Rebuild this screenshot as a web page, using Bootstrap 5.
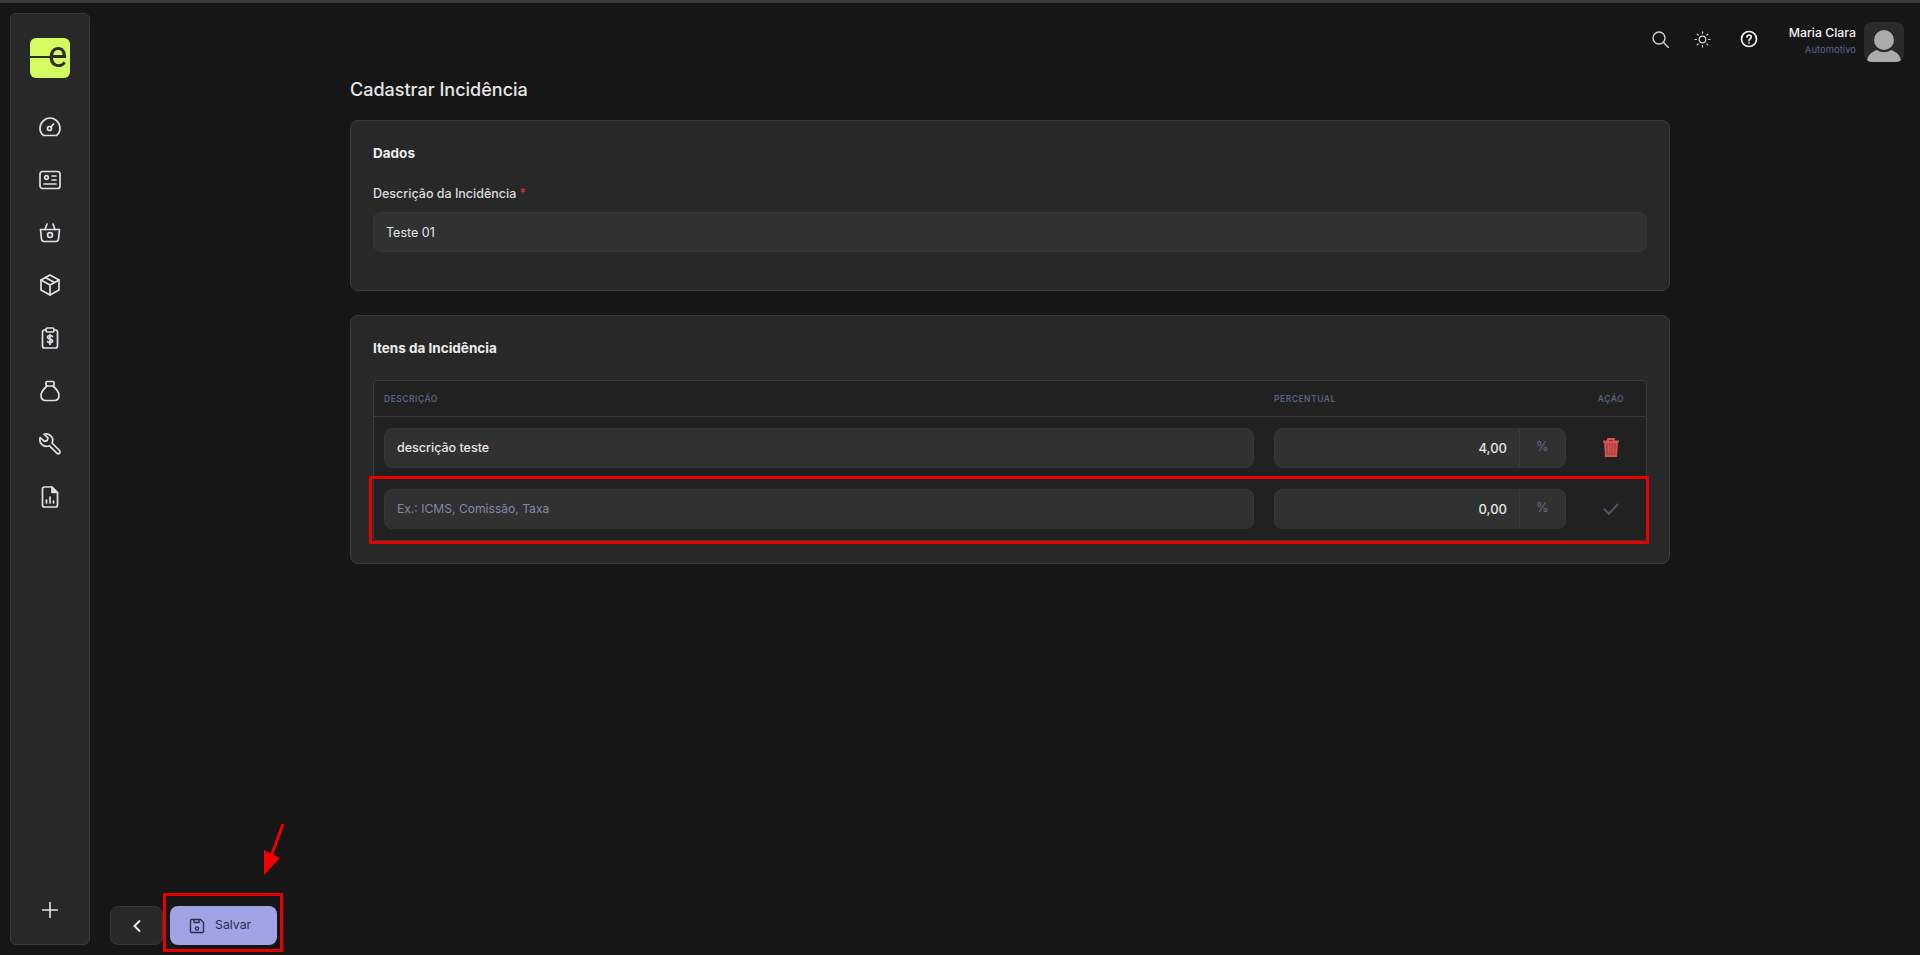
<!DOCTYPE html>
<html lang="pt-BR">
<head>
<meta charset="utf-8">
<title>Cadastrar Incidência</title>
<link href="https://cdn.jsdelivr.net/npm/bootstrap@5.3.0/dist/css/bootstrap.min.css" rel="stylesheet">
<style>
html,body{height:955px;overflow:hidden}
body{background:#161616;color:#e6e6e6;font-family:"Inter","Liberation Sans",sans-serif;font-size:12.5px;border-top:3px solid #3b3b3b;position:relative}
.app-shell{height:952px;padding:10px}
.side-rail{width:80px;height:932px;background:#282828;border:1px solid #3a3a3a;border-radius:6px;padding-top:24px;padding-bottom:25px;flex:none}
.logo-box{width:40px;height:40px;background:#d4fb5f;border-radius:6px;position:relative;color:#2a2e1c;font-size:36px;font-weight:400;line-height:34px;text-align:right;padding-right:3px;font-family:"Roboto",sans-serif}
.logo-box::before{content:"";position:absolute;left:0;top:18px;width:36px;height:2px;background:#2a2e1c}
.rail-icons{margin-top:37px;gap:28.800px}
.rail-icons svg{display:block}
.rail-ico{width:24px;height:24px;stroke:#dfe1e6;fill:none;stroke-width:1.7;stroke-linecap:round;stroke-linejoin:round}
.main-col{min-width:0;padding-left:10px}
.top-strip{height:50px;padding-top:7px;padding-right:6px}
.top-icons{margin-right:31px;margin-bottom:5px}
.top-search{margin-right:25px}
.top-sun{margin-right:29px}
.user-name{font-size:12.300px;font-weight:500;color:#f0f0f0;line-height:16px;margin-top:-1px;margin-bottom:1px}
.user-role{font-size:9.5px;color:#55658a;line-height:16px}
.user-pic{width:40px;height:40px;background:#2a2a2a;border-radius:8px;overflow:hidden}
.page-area{width:1320px;margin-left:250px}
.page-head{font-size:18px;font-weight:500;color:#e6e6e6;line-height:22px;margin-top:16px;margin-bottom:19px}
.panel-box{background:#282828;border:1px solid #3d3d3d;border-radius:8px;padding:22px 22px 0 22px}
.panel-one{height:171px;margin-bottom:24px}
.panel-two{height:249px}
.panel-title{font-size:13.500px;font-weight:700;line-height:20px;color:#ececec}
.field-label{font-size:12.500px;font-weight:500;line-height:16px;margin-top:23px;margin-bottom:10px;color:#dcdcdc}
.req-star{color:#c8343c}
.dark-input{height:40px;background:#303231;border:1px solid #353736;border-radius:8px;color:#e6e6e6;font-size:12.5px;font-family:inherit;padding:0 12px;width:100%;outline:none}
.dark-input::placeholder{color:#808ba6;opacity:1;font-size:12.100px}
.strong-val{font-weight:500;font-size:12.500px}
.grid-wrap{margin-top:22px;border:1px solid #3a3a3a;border-radius:4px;background:#212121;height:161px;overflow:hidden}
.grid-head{height:36px;padding-top:1px;border-bottom:1px solid #3a3a3a;font-size:8.500px;font-weight:600;letter-spacing:.5px;color:#55627e;align-items:center}
.grid-row{height:61px;align-items:center}
.cell-a{width:890px;padding:0 10px;flex:none}
.cell-b{width:312px;padding:0 10px;flex:none}
.cell-c{flex:1;text-align:center}
.pct-group{height:40px;background:#303231;border:1px solid #353736;border-radius:8px;display:flex;overflow:hidden}
.pct-val{flex:1;text-align:right;padding-right:12px;line-height:38px;font-size:13px;font-weight:500}
.pct-suffix{width:46px;border-left:1px solid #3a3c3b;color:#5f6c88;text-align:center;line-height:34px;font-size:13px}
.bottom-bar{position:absolute;left:110px;bottom:10px;gap:7px}
.back-btn{width:53px;height:39px;background:#282828;border:1px solid #383838;border-radius:8px;padding:0}
.back-btn:hover{background:#282828}
.save-btn{width:107px;height:39px;background:#a2a3e4;border:0;border-radius:8px;color:#2b2d4c;font-size:12.3px;gap:10px;padding:0 0 0 19px}
.save-btn:hover{background:#a2a3e4;color:#2b2d4c}
.mark-box{position:absolute;border:3px solid #e60000;pointer-events:none}
.mark-row{left:369px;top:473px;width:1280px;height:68px}
.mark-save{left:163px;top:890px;width:120px;height:59px}
.mark-arrow{position:absolute;left:255px;top:818px}
</style>
</head>
<body>
<div class="app-shell d-flex">
  <nav class="side-rail d-flex flex-column align-items-center">
    <div class="logo-box">e</div>
    <div class="rail-icons d-flex flex-column align-items-center">
      <svg class="rail-ico" viewBox="0 0 24 24"><path d="M5.500 20.500C3.300 18.800 2 16.200 2 13.500 2 7.700 6.500 3 12 3s10 4.700 10 10.500c0 2.700-1.300 5.300-3.500 7z"/><circle cx="11.500" cy="13.500" r="2"/><path d="M13 12l2.500-3"/></svg>
      <svg class="rail-ico" viewBox="0 0 24 24"><rect x="2" y="3.500" width="20" height="17" rx="2.500"/><circle cx="8.500" cy="9.500" r="1.800"/><path d="M14 8h4M14 12h4M6 16h12"/></svg>
      <svg class="rail-ico" viewBox="0 0 24 24"><path d="M2.500 8.500h19l-1 9.500c-.2 1.500-1.300 2.500-2.800 2.500H6.300c-1.500 0-2.600-1-2.800-2.500z"/><path d="M7 8.500 9 3M17 8.500 15 3"/><circle cx="12" cy="14" r="2.400"/></svg>
      <svg class="rail-ico" viewBox="0 0 24 24"><path d="M12 2l9 5v10l-9 5-9-5V7z"/><path d="M3 7l9 5 9-5M12 12v10M7.500 4.500l9 5"/></svg>
      <svg class="rail-ico" viewBox="0 0 24 24"><path d="M8 4H6.500C5.500 4 4.500 5 4.500 6v14c0 1 1 2 2 2h11c1 0 2-1 2-2V6c0-1-1-2-2-2H16"/><rect x="8" y="2" width="8" height="4" rx="1.500"/><path d="M14.500 10.500c-.5-.7-1.400-1-2.500-1-1.400 0-2.500.7-2.500 1.800 0 2.400 5 1.200 5 3.500 0 1.100-1.100 1.800-2.500 1.800-1.100 0-2-.4-2.500-1M12 8.500v10"/></svg>
      <svg class="rail-ico" viewBox="0 0 24 24"><rect x="8" y="2.500" width="8" height="4.500" rx="1"/><path d="M9 7C5.500 10 3 13 3 16.500c0 3 2 5 5 5h8c3 0 5-2 5-5C21 13 18.500 10 15 7"/></svg>
      <svg class="rail-ico" viewBox="0 0 24 24"><path d="M14 11l7.500 7.500c.8.800.8 2 0 2.700s-1.900.8-2.700 0L11.300 13.700C8.700 14.700 5.700 14.200 3.800 12.300 2 10.500 1.400 7.900 2.200 5.600L6.400 9.400 9.200 8.600 10 5.900 6 2.200C8.300 1.400 11 2 12.800 3.800c1.900 1.900 2.300 5 1.200 7.200z"/></svg>
      <svg class="rail-ico" viewBox="0 0 24 24"><path d="M14 2H6.500c-1 0-2 1-2 2v16c0 1 1 2 2 2h11c1 0 2-1 2-2V7.500z"/><path d="M14 2v5.500h5.500" fill="#dfe1e6"/><path d="M8.500 18v-3M12 18v-6M15.500 18v-2"/></svg>
    </div>
    <div class="mt-auto"><svg width="16" height="16" viewBox="0 0 16 16" stroke="#e6e6e6" stroke-width="1.600" fill="none"><path d="M8 0v16M0 8h16"/></svg></div>
  </nav>
  <div class="main-col flex-grow-1">
    <header class="top-strip d-flex justify-content-end align-items-center">
      <div class="top-icons d-flex align-items-center">
        <svg class="top-search" width="17" height="17" viewBox="0 0 17 17" fill="none" stroke="#d0d0d0" stroke-width="1.400" stroke-linecap="round"><circle cx="7" cy="7" r="6"/><path d="M11.500 11.500l5 5"/></svg>
        <svg class="top-sun" width="17" height="17" viewBox="0 0 18 18" fill="none" stroke="#d0d0d0" stroke-width="1.300" stroke-linecap="round"><circle cx="9" cy="9" r="3.500"/><path d="M9 1v1.500M9 15.500V17M1 9h1.500M15.500 9H17M3.300 3.300l1.100 1.100M13.600 13.600l1.100 1.100M3.300 14.700l1.100-1.100M13.600 4.400l1.100-1.100"/></svg>
        <svg width="18" height="18" viewBox="0 0 18 18" fill="none" stroke="#f0f0f0" stroke-width="1.700" stroke-linecap="round"><circle cx="9" cy="9" r="7.500"/><path d="M6.800 7c.2-1.200 1.100-1.800 2.200-1.800 1.300 0 2.300.8 2.300 1.900 0 1.600-2.300 1.700-2.300 3.300M9 12.900v.1"/></svg>
      </div>
      <div class="text-end me-2">
        <div class="user-name">Maria Clara</div>
        <div class="user-role">Automotivo</div>
      </div>
      <div class="user-pic">
        <svg width="40" height="40" viewBox="0 0 40 40" fill="#ababab"><circle cx="20" cy="18" r="10"/><path d="M3 40c0-6 4-10 10-12 4 3 10 3 14 0 6 2 10 6 10 12z"/></svg>
      </div>
    </header>
    <main class="page-area">
      <h1 class="page-head">Cadastrar Incidência</h1>
      <section class="panel-box panel-one">
        <div class="panel-title">Dados</div>
        <div class="field-label">Descrição da Incidência <span class="req-star">*</span></div>
        <input class="dark-input" value="Teste 01">
      </section>
      <section class="panel-box panel-two">
        <div class="panel-title">Itens da Incidência</div>
        <div class="grid-wrap">
          <div class="grid-head d-flex">
            <div class="cell-a">DESCRIÇÃO</div>
            <div class="cell-b">PERCENTUAL</div>
            <div class="cell-c">AÇÃO</div>
          </div>
          <div class="grid-row d-flex">
            <div class="cell-a"><input class="dark-input strong-val" value="descrição teste"></div>
            <div class="cell-b"><div class="pct-group"><div class="pct-val">4,00</div><div class="pct-suffix">%</div></div></div>
            <div class="cell-c"><svg width="16" height="19" viewBox="0 0 16 19" fill="none" stroke="#d9534f" stroke-width="1.800"><path d="M0 3.500h16M5 3V1h6v2"/><path d="M2 4.500l.8 13.500h10.400L14 4.500z" fill="#a84543"/><path d="M5.500 6.500v9M8 6.500v9M10.500 6.500v9" stroke-width="1.300"/></svg></div>
          </div>
          <div class="grid-row d-flex">
            <div class="cell-a"><input class="dark-input" placeholder="Ex.: ICMS, Comissão, Taxa"></div>
            <div class="cell-b"><div class="pct-group"><div class="pct-val">0,00</div><div class="pct-suffix">%</div></div></div>
            <div class="cell-c"><svg width="16" height="12" viewBox="0 0 16 12" fill="none" stroke="#50536f" stroke-width="2"><path d="M1 6l4.800 4.800L15 1"/></svg></div>
          </div>
        </div>
      </section>
    </main>
  </div>
</div>
<div class="bottom-bar d-flex">
  <button class="btn back-btn d-flex align-items-center justify-content-center" aria-label="Voltar"><svg width="10" height="14" viewBox="0 0 10 14" fill="none" stroke="#e8e8e8" stroke-width="2"><path d="M8 1.500 2.500 7 8 12.500"/></svg></button>
  <button class="btn save-btn d-flex align-items-center"><svg width="16" height="16" viewBox="0 0 16 16" fill="none" stroke="#2b2d4c" stroke-width="1.400" stroke-linejoin="round"><path d="M1.500 2.500c0-.6.4-1 1-1h9l3 3v9c0 .6-.4 1-1 1h-11c-.6 0-1-.4-1-1z"/><path d="M5 1.500v3h5v-3"/><circle cx="8" cy="10.500" r="1.600"/></svg>Salvar</button>
</div>
<div class="mark-box mark-row"></div>
<div class="mark-box mark-save"></div>
<svg class="mark-arrow" width="36" height="62" viewBox="0 0 36 62"><path d="M28 3 15 38" stroke="#f00000" stroke-width="3"/><path d="M9 54 9 29 25 37z" fill="#f00000"/></svg>
<script src="https://cdn.jsdelivr.net/npm/bootstrap@5.3.0/dist/js/bootstrap.bundle.min.js"></script>
</body>
</html>
